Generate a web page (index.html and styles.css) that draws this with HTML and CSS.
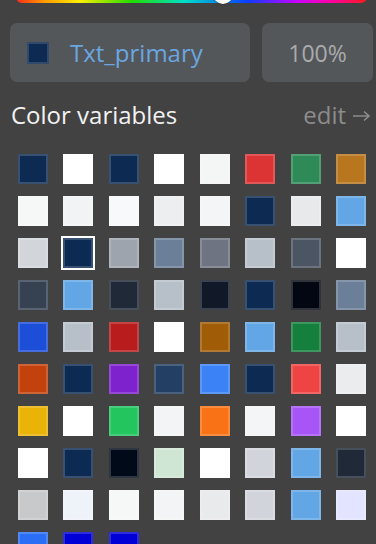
FILE: index.html
```html
<!doctype html>
<html lang="en">

<head>
  <meta charset="UTF-8" />
  <meta name="viewport" content="width=device-width, initial-scale=1.0" />
  <title>Color variables</title>
  <link rel="stylesheet" href="styles.css">
</head>

<body>
  <div class="picker">
    <div class="hue">
      <div class="hue-thumb"></div>
    </div>

    <div class="fields">
      <div class="field name-field">
        <span class="chip" style="background:#0d2a52"></span>
        <span class="name">Txt_primary</span>
      </div>
      <div class="field alpha-field">100%</div>
    </div>

    <div class="section-head">
      <span class="section-title">Color variables</span>
      <span class="section-link">edit
        <svg class="arrow" width="19" height="12" viewBox="0 0 19 12">
          <path d="M1 6H17M12 1.5L17 6L12 10.5" fill="none" stroke="currentColor" stroke-width="1.6" />
        </svg>
      </span>
    </div>

    <div class="swatches" id="swatches"></div>
  </div>
  <script src="script.js"></script>
</body>

</html>
```

FILE: styles.css
```css
* {
  margin: 0;
  padding: 0;
  box-sizing: border-box;
  font-family: 'Open Sans', 'Noto Sans', sans-serif;
}

body {
  overflow: hidden;
  background: #424242;
  height: 100vh;
}

.picker {
  display: flex;
  flex-direction: column;
}

.hue {
  position: relative;
  height: 12px;
  margin: -9px 9px 0 16px;
  border-radius: 6px;
  background: linear-gradient(90deg, #ff2a1a, #ff9a00 8%, #ffee00 18%, #22dd00 33%, #00e0c8 48%, #0a3cff 66%, #c800ff 80%, #ff00a0 90%, #ff1a1a);
}

.hue-thumb {
  position: absolute;
  top: -7px;
  left: 197px;
  width: 20px;
  height: 20px;
  border-radius: 50%;
  background: #fff;
  box-shadow: 0 0 2px rgba(0, 0, 0, 0.5);
}

.fields {
  display: flex;
  gap: 12px;
  margin-top: 20px;
  padding: 0 3px 0 10px;
}

.field {
  height: 59px;
  border-radius: 7px;
  background: #54575a;
  display: flex;
  align-items: center;
}

.name-field {
  width: 240px;
  padding-left: 17px;
  gap: 21px;
}

.chip {
  width: 22px;
  height: 22px;
  box-shadow: inset 0 0 0 2px rgba(255, 255, 255, 0.15);
}

.name {
  color: #6aa6e0;
  font-size: 24px;
  line-height: 30px;
}

.alpha-field {
  flex: 1;
  justify-content: center;
  color: #a9abad;
  font-size: 23px;
  line-height: 30px;
}

.section-head {
  display: flex;
  justify-content: space-between;
  align-items: center;
  margin-top: 18px;
  padding: 0 5px 0 11px;
  line-height: 30px;
}

.section-title {
  color: #f2f2f2;
  font-size: 24px;
}

.section-link {
  display: flex;
  align-items: center;
  gap: 6px;
  color: #8c8c8c;
  font-size: 24px;
}

.arrow {
  margin-top: 2px;
}

.swatches {
  display: grid;
  grid-template-columns: repeat(8, 30px);
  justify-content: space-between;
  row-gap: 12px;
  margin-top: 24px;
  padding: 0 10px 0 18px;
}

.swatch {
  width: 30px;
  height: 30px;
  box-shadow: inset 0 0 0 2px rgba(255, 255, 255, 0.18);
}

.swatch.selected {
  outline: 2px solid #fff;
}
```

FILE: script.js
```js
const colors = [
  '#0d2a52', '#ffffff', '#0d2a52', '#ffffff', '#f4f5f5', '#dc3434', '#2e8a57', '#b8761e',
  '#f6f7f7', '#f1f3f4', '#f8f9fa', '#eceef0', '#f4f5f6', '#0d2a52', '#e8e9eb', '#62a6e6',
  '#d2d6da', '#0d2a52', '#9ea4ae', '#6b7f98', '#6e7481', '#b7c0c9', '#4b5563', '#ffffff',
  '#364152', '#62a6e6', '#1f2937', '#b7c0c9', '#111827', '#0d2a52', '#030712', '#6b7f98',
  '#1d4ed8', '#b7c0c9', '#b91c1c', '#ffffff', '#a15c07', '#62a6e6', '#15803d', '#b7c0c9',
  '#c2410c', '#0d2a52', '#7e22ce', '#233f63', '#3b82f6', '#0d2a52', '#ef4444', '#ebecee',
  '#eab308', '#ffffff', '#22c55e', '#f3f4f5', '#f97316', '#f4f5f6', '#a855f7', '#ffffff',
  '#ffffff', '#0d2a52', '#010a18', '#d0e6d5', '#ffffff', '#d1d5db', '#62a6e6', '#1f2937',
  '#c8c9ca', '#eef3fa', '#f6f7f7', '#f3f4f5', '#e9eaec', '#d1d5db', '#62a6e6', '#e3e4ff',
  '#2a6ef5', '#0000d6', '#0000d6'
];

const grid = document.getElementById('swatches');
colors.forEach((c, i) => {
  const el = document.createElement('div');
  el.className = 'swatch' + (i === 17 ? ' selected' : '');
  el.style.background = c;
  grid.appendChild(el);
});
```
